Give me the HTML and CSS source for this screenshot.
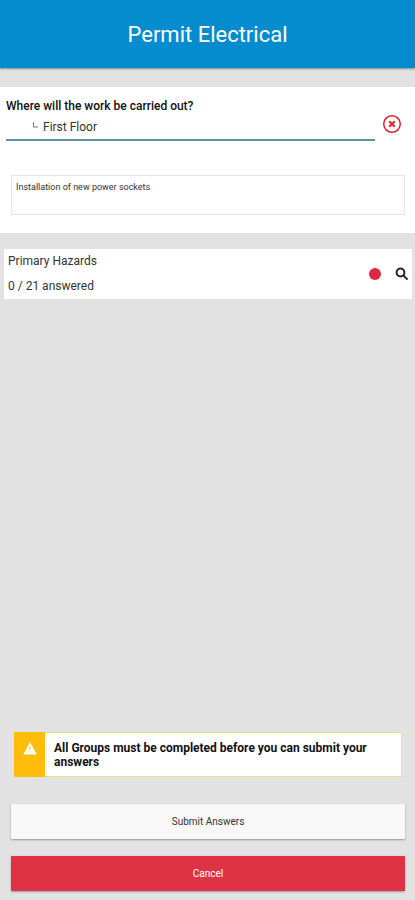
FILE: index.html
```html
<!DOCTYPE html>
<html lang="en">
<head>
<meta charset="utf-8">
<meta name="viewport" content="width=device-width, initial-scale=1">
<title>Permit Electrical</title>
<link rel="stylesheet" href="styles.css">
</head>
<body>
<header class="app-bar"><h1>Permit Electrical</h1></header>
<main class="content">
  <section class="details">
    <div class="location">
      <div class="location-main">
        <label class="question" for="location">Where will the work be carried out?</label>
        <div class="location-field">
          <svg class="branch" viewBox="0 0 8 12" aria-hidden="true"><path d="M2.500 1v5H7"/></svg>
          <input id="location" type="text" value="First Floor">
        </div>
      </div>
      <button class="clear" type="button" aria-label="Clear location">
        <svg viewBox="0 0 20 20" aria-hidden="true"><circle cx="10" cy="10" r="8.300"/><path class="cross" d="M7.200 7.200l5.600 5.600M12.800 7.200l-5.600 5.600"/></svg>
      </button>
    </div>
    <textarea class="description" aria-label="Description">Installation of new power sockets</textarea>
  </section>
  <section class="group">
    <div class="group-text">
      <h2>Primary Hazards</h2>
      <p>0 / 21 answered</p>
    </div>
    <span class="status"></span>
    <button class="search" type="button" aria-label="View group">
      <svg viewBox="0 0 14 14" aria-hidden="true"><circle cx="5.500" cy="5.500" r="3.900"/><path d="M8.600 8.600l4 4"/></svg>
    </button>
  </section>
</main>
<footer class="actions">
  <div class="alert" role="alert">
    <div class="alert-icon">
      <svg viewBox="0 0 14 13" aria-hidden="true"><path class="triangle" d="M7 1L13 12H1z"/><path class="mark" d="M7 4.800v3.400M7 9.300v1.200"/></svg>
    </div>
    <p>All Groups must be completed before you can submit your answers</p>
  </div>
  <button class="action" type="button">Submit Answers</button>
  <button class="action cancel" type="button">Cancel</button>
</footer>
</body>
</html>
```
FILE: styles.css
```css
* {
  box-sizing: border-box;
}

body {
  margin: 0;
  min-height: 100vh;
  display: flex;
  flex-direction: column;
  background: #e2e2e2;
  color: #333;
  font-family: Roboto, "Liberation Sans", sans-serif;
  font-size: 12px;
}

h1, h2, p {
  margin: 0;
  font-weight: 400;
}

button, input, textarea {
  font: inherit;
  color: inherit;
  border: 0;
  border-radius: 0;
  padding: 0;
}

svg {
  display: block;
  fill: none;
}

.app-bar {
  height: 68px;
  display: flex;
  align-items: center;
  justify-content: center;
  background: #058ccf;
  color: #fff;
  box-shadow: 0 1px 2px #888;
}

.app-bar h1 {
  font-size: 22px;
}

.content {
  flex: 1;
  padding-top: 19px;
}

.details {
  background: #fff;
  padding: 12px 10px 18px 6px;
}

.location {
  display: flex;
  align-items: center;
  gap: 6px;
}

.location-main {
  flex: 1;
}

.question {
  display: block;
  color: #111;
  font-weight: 500;
  line-height: 14px;
}

.location-field {
  display: flex;
  align-items: center;
  gap: 4px;
  height: 28px;
  padding: 2px 0 0 25px;
  border-bottom: 2px solid #5f91a7;
}

.location-field input {
  flex: 1;
  min-width: 0;
  background: transparent;
}

.branch {
  width: 8px;
  height: 12px;
  stroke: #777;
}

.clear {
  width: 22px;
  height: 22px;
  padding: 1px;
  margin: 8px 2px 0 0;
  background: none;
}

.clear svg {
  stroke: #dc2328;
  stroke-width: 1.5;
}

.clear .cross {
  stroke-width: 2;
}

.description {
  display: block;
  width: calc(100% - 5px);
  height: 40px;
  margin: 34px 0 0 5px;
  padding: 5px 4px;
  border: 1px solid #e6e6e6;
  resize: none;
  overflow: hidden;
  font-size: 9px;
  line-height: 12px;
}

.group {
  display: flex;
  align-items: center;
  margin: 16px 3px 0 4px;
  padding: 0 3px 0 4px;
  background: #fff;
}

.group-text {
  flex: 1;
}

.group h2, .group p {
  font-size: 12px;
  line-height: 25px;
}

.status {
  width: 12px;
  height: 12px;
  border-radius: 50%;
  background: #dc2840;
}

.search {
  width: 14px;
  height: 14px;
  margin-left: 14px;
  background: none;
}

.search svg {
  stroke: #222;
  stroke-width: 2;
}

.actions {
  display: flex;
  flex-direction: column;
  gap: 17px;
  padding: 0 10px 9px 11px;
}

.alert {
  display: flex;
  margin: 0 3px 10px;
  border: 1px solid #efdc83;
  background: #fff;
}

.alert-icon {
  width: 31px;
  padding-top: 10px;
  margin: -1px 0 -1px -1px;
  background: #ffbd0b;
}

.alert-icon svg {
  width: 14px;
  height: 13px;
  margin: 0 auto;
}

.triangle {
  fill: #fff;
  stroke: #fff;
  stroke-linejoin: round;
}

.mark {
  stroke: #ffbd0b;
}

.alert p {
  flex: 1;
  padding: 8px 9px 7px;
  color: #111;
  font-size: 12px;
  font-weight: 700;
  line-height: 14px;
}

.action {
  height: 35px;
  background: #f8f8f8;
  font-size: 10px;
  border-radius: 1px;
  box-shadow: 0 1px 2px #999;
}

.cancel {
  background: #df3345;
  color: #fff;
}
```
